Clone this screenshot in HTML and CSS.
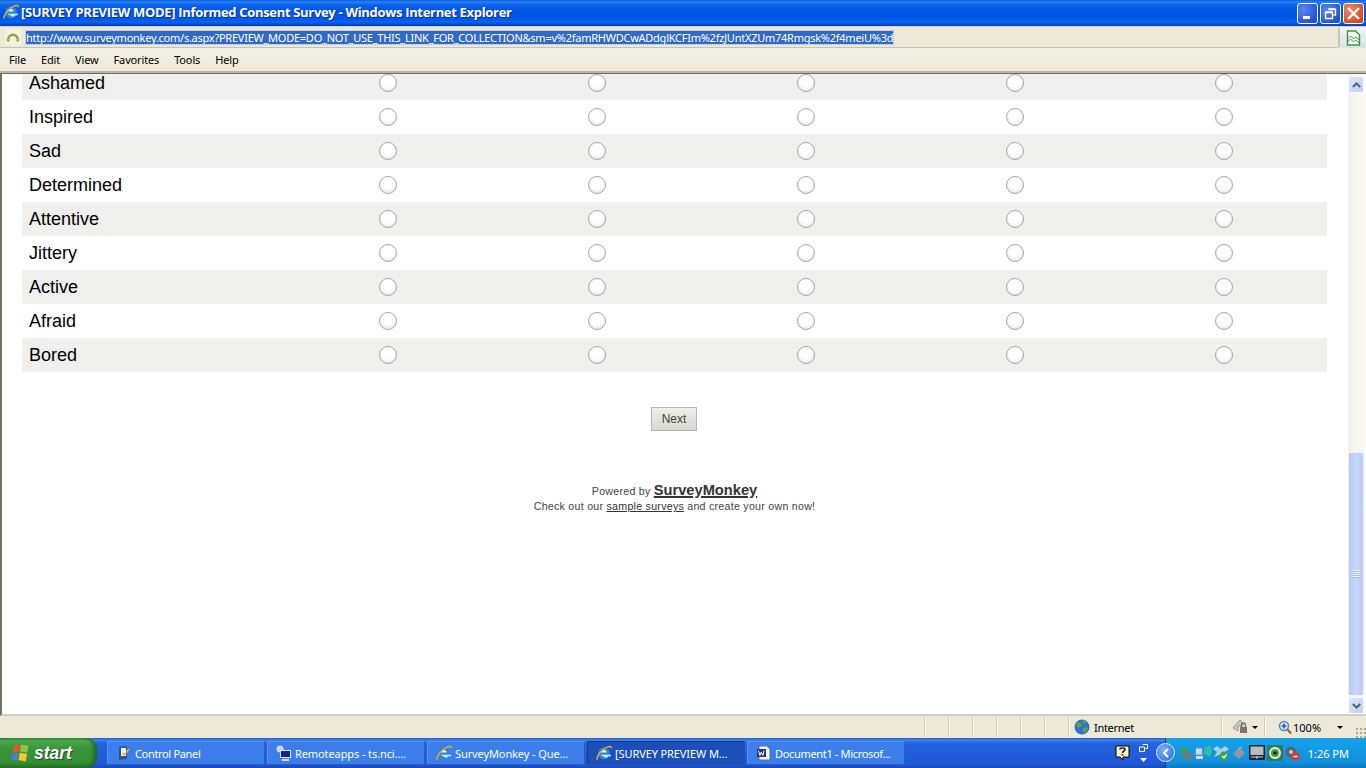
FILE: index.html
```html
<!DOCTYPE html>
<html lang="en">
<head>
<meta charset="utf-8">
<title>[SURVEY PREVIEW MODE] Informed Consent Survey - Windows Internet Explorer</title>
<link rel="stylesheet" href="styles.css">
</head>
<body>
<svg class="defs" width="0" height="0" aria-hidden="true">
  <symbol id="ie" viewBox="0 0 16 16">
    <circle cx="8" cy="8.500" r="6" fill="#2a86dc"/>
    <path d="M5.200 7.400a2.900 2.900 0 0 1 5.700 0z" fill="#e6f3ff"/>
    <path d="M4.900 9.700H15v1.600h-2.700a2.800 2.800 0 0 1-4.800 0l-.1.100a3 3 0 0 1-2.500-1.700z" fill="#d5e9fb"/>
    <path d="M1.500 14.800C-.4 13.200 4.500 6 8.500 3.500 12 1.300 15.900.4 15.100 3.200" fill="none" stroke="#eeb01e" stroke-width="1.400"/>
  </symbol>
</svg>
<div class="app">
  <header class="titlebar">
    <svg class="title-icon"><use href="#ie"/></svg>
    <span class="title-text">[SURVEY PREVIEW MODE] Informed Consent Survey - Windows Internet Explorer</span>
    <div class="win-buttons">
      <div class="win-btn"><svg width="21" height="21" viewBox="0 0 21 21"><rect x="6" y="13" width="7" height="3" fill="#fff"/></svg></div>
      <div class="win-btn"><svg width="21" height="21" viewBox="0 0 21 21"><path d="M8.500 6.500h7v5.500h-2M5.500 9.500h7v6h-7z" fill="none" stroke="#fff" stroke-width="1.400"/><path d="M8.500 6h7M5.500 9h7" stroke="#fff" stroke-width="1.600"/></svg></div>
      <div class="win-btn win-close"><svg width="21" height="21" viewBox="0 0 21 21"><path d="M5 5l11 11M16 5L5 16" stroke="#fff" stroke-width="2.400"/></svg></div>
    </div>
  </header>
  <div class="addressbar">
    <div class="addr-field">
      <div class="addr-icon"><svg width="16" height="16" viewBox="0 0 16 16"><path d="M3.200 10.500A4.800 4.800 0 0 1 12.800 10.500" fill="none" stroke="#8fa83c" stroke-width="2.400"/><path d="M1 10.500h4.400L3.200 13.200zM10.600 10.500H15l-2.200 2.700z" fill="#8fa83c"/></svg></div>
      <span class="addr-url">http://www.surveymonkey.com/s.aspx?PREVIEW_MODE=DO_NOT_USE_THIS_LINK_FOR_COLLECTION&amp;sm=v%2famRHWDCwADdglKCFIm%2fzJUntXZUm74Rmgsk%2f4meiU%3d</span>
    </div>
    <div class="compat"><svg width="15" height="16" viewBox="0 0 15 16"><path d="M1.500 1h8l4 4v10h-12z" fill="#fff" stroke="#2e9a35" stroke-width="1.400"/><path d="M1.500 9l3-3 3 3 2-2 4 3M1.500 12l3-3 3 3 2-2 4 3" fill="none" stroke="#2e9a35"/></svg></div>
  </div>
  <nav class="menubar">
    <span class="menu-item">File</span>
    <span class="menu-item">Edit</span>
    <span class="menu-item">View</span>
    <span class="menu-item">Favorites</span>
    <span class="menu-item">Tools</span>
    <span class="menu-item">Help</span>
  </nav>
  <div class="viewport">
    <main class="page">
      <div class="survey">
        <div class="row"><span class="label">Ashamed</span><input class="radio" type="radio" name="r1"><input class="radio" type="radio" name="r1"><input class="radio" type="radio" name="r1"><input class="radio" type="radio" name="r1"><input class="radio" type="radio" name="r1"></div>
        <div class="row"><span class="label">Inspired</span><input class="radio" type="radio" name="r2"><input class="radio" type="radio" name="r2"><input class="radio" type="radio" name="r2"><input class="radio" type="radio" name="r2"><input class="radio" type="radio" name="r2"></div>
        <div class="row"><span class="label">Sad</span><input class="radio" type="radio" name="r3"><input class="radio" type="radio" name="r3"><input class="radio" type="radio" name="r3"><input class="radio" type="radio" name="r3"><input class="radio" type="radio" name="r3"></div>
        <div class="row"><span class="label">Determined</span><input class="radio" type="radio" name="r4"><input class="radio" type="radio" name="r4"><input class="radio" type="radio" name="r4"><input class="radio" type="radio" name="r4"><input class="radio" type="radio" name="r4"></div>
        <div class="row"><span class="label">Attentive</span><input class="radio" type="radio" name="r5"><input class="radio" type="radio" name="r5"><input class="radio" type="radio" name="r5"><input class="radio" type="radio" name="r5"><input class="radio" type="radio" name="r5"></div>
        <div class="row"><span class="label">Jittery</span><input class="radio" type="radio" name="r6"><input class="radio" type="radio" name="r6"><input class="radio" type="radio" name="r6"><input class="radio" type="radio" name="r6"><input class="radio" type="radio" name="r6"></div>
        <div class="row"><span class="label">Active</span><input class="radio" type="radio" name="r7"><input class="radio" type="radio" name="r7"><input class="radio" type="radio" name="r7"><input class="radio" type="radio" name="r7"><input class="radio" type="radio" name="r7"></div>
        <div class="row"><span class="label">Afraid</span><input class="radio" type="radio" name="r8"><input class="radio" type="radio" name="r8"><input class="radio" type="radio" name="r8"><input class="radio" type="radio" name="r8"><input class="radio" type="radio" name="r8"></div>
        <div class="row"><span class="label">Bored</span><input class="radio" type="radio" name="r9"><input class="radio" type="radio" name="r9"><input class="radio" type="radio" name="r9"><input class="radio" type="radio" name="r9"><input class="radio" type="radio" name="r9"></div>
      </div>
      <div class="next-wrap"><button class="next" type="button">Next</button></div>
      <footer class="powered">
        <div class="powered-line">Powered by <a class="brand" href="#">SurveyMonkey</a></div>
        <div class="sample-line">Check out our <a class="sample" href="#">sample surveys</a> and create your own now!</div>
      </footer>
    </main>
    <div class="scrollbar">
      <div class="sb-btn"><svg width="9" height="6" viewBox="0 0 9 6"><path d="M.8 5L4.500 1.500 8.200 5" fill="none" stroke="#4d6185" stroke-width="2"/></svg></div>
      <div class="sb-track">
        <div class="sb-thumb"><div class="sb-grip"></div></div>
      </div>
      <div class="sb-btn"><svg width="9" height="6" viewBox="0 0 9 6"><path d="M.8 1L4.500 4.500 8.200 1" fill="none" stroke="#4d6185" stroke-width="2"/></svg></div>
    </div>
  </div>
  <div class="statusbar">
    <div class="st-empty"></div>
    <div class="st-cell"></div><div class="st-cell"></div><div class="st-cell"></div><div class="st-cell"></div><div class="st-cell"></div><div class="st-cell"></div>
    <div class="st-zone">
      <svg width="16" height="16" viewBox="0 0 16 16"><circle cx="8" cy="8" r="7.500" fill="#2f6fd0"/><path d="M3 3l4 1 1 3-3 2-3-2zM9 9l4-1 1 2-3 4-2-1zM9 1l4 2-2 2-2-1z" fill="#58a845"/></svg>
      <span class="zone-name">Internet</span>
    </div>
    <div class="st-protect">
      <svg width="16" height="16" viewBox="0 0 16 16"><path d="M1 9l7-8 3 3v3H6v5z" fill="#c8c8c0" stroke="#98988f"/><rect x="8" y="8" width="7" height="6" fill="#77776f"/><path d="M9.500 8V6a2 2 0 0 1 4 0v2" fill="none" stroke="#77776f" stroke-width="1.300"/></svg>
      <span class="caret"></span>
    </div>
    <div class="st-zoom">
      <svg width="14" height="15" viewBox="0 0 14 15"><circle cx="6" cy="6" r="4.500" fill="#d8e8fa" stroke="#5b83c4" stroke-width="1.500"/><path d="M3.500 6h5M6 3.500v5" stroke="#2a5cb8" stroke-width="1.600"/><path d="M9.500 9.500l3.500 4" stroke="#a05a3c" stroke-width="2"/></svg>
      <span>100%</span>
      <span class="caret caret-zoom"></span>
    </div>
    <div class="st-grip"></div>
  </div>
  <div class="taskbar">
    <button class="start" type="button">
      <svg width="20" height="18" viewBox="0 0 20 18"><path d="M4 1.500l6-1.200-1.200 7.400-6.300 1z" fill="#e4572e"/><path d="M11 .5l7.500 1.200-1.300 6.800-7.200-1z" fill="#8cc63f"/><path d="M2.200 9.700l6.300-.9-1.200 7.700-6.600-1.300z" fill="#3f83dc"/><path d="M9.700 8.800l7.300 1-1.200 7.700-7.300-1.500z" fill="#f6c82e"/></svg>
      <span>start</span>
    </button>
    <div class="tasks">
      <div class="task task-tight">
        <svg width="16" height="16" viewBox="0 0 16 16"><path d="M3 2l8-1v13l-8 1z" fill="#2f5590"/><path d="M5 3h5v8H5z" fill="#f4f4ec"/><path d="M6 8l2 2 5-6" fill="none" stroke="#e8b82a" stroke-width="1.500"/></svg>
        <span>Control Panel</span>
      </div>
      <div class="task">
        <svg width="16" height="16" viewBox="0 0 16 16"><circle cx="4" cy="4" r="3.500" fill="#cfd6de"/><rect x="4" y="5" width="11" height="8" fill="#e2e6ea"/><rect x="5" y="6" width="9" height="6" fill="#12258c"/><rect x="6" y="14" width="7" height="2" fill="#d5d9dd"/></svg>
        <span>Remoteapps - ts.nci....</span>
      </div>
      <div class="task">
        <svg width="16" height="16"><use href="#ie"/></svg>
        <span>SurveyMonkey - Que...</span>
      </div>
      <div class="task task-active">
        <svg width="16" height="16"><use href="#ie"/></svg>
        <span>[SURVEY PREVIEW M...</span>
      </div>
      <div class="task task-tight">
        <svg width="16" height="16" viewBox="0 0 16 16"><path d="M3 1h8l3 3v11H3z" fill="#f4f6fa" stroke="#5a6a90"/><rect x="1" y="4" width="9" height="8" fill="#22367e"/><path d="M2.500 5.500l1.300 5 1.500-3.500 1.500 3.500 1.300-5" fill="none" stroke="#fff"/></svg>
        <span>Document1 - Microsof...</span>
      </div>
    </div>
    <div class="quick">
      <svg class="help" width="15" height="16" viewBox="0 0 15 16"><path d="M1 1h13v11H8v3l-3-3H1z" fill="#fbf7b8" stroke="#000"/><path d="M5 4.500C5 2.500 10 2.500 10 4.500 10 6 7.500 6 7.500 8M7.500 9v1.500" fill="none" stroke="#16217a" stroke-width="1.700"/></svg>
      <div class="lang">
        <svg width="9" height="8" viewBox="0 0 9 8"><path d="M3.500.5h5v4h-2M.5 3h5v4.500h-5z" fill="none" stroke="#fff"/></svg>
        <svg width="7" height="4" viewBox="0 0 7 4"><path d="M0 0h7L3.500 4z" fill="#fff"/></svg>
      </div>
    </div>
    <div class="tray">
      <div class="tray-toggle"><svg width="10" height="10" viewBox="0 0 10 10"><path d="M7 1L3 5l4 4" fill="none" stroke="#fff" stroke-width="2"/></svg></div>
      <div class="tray-icons">
        <svg width="14" height="16" viewBox="0 0 14 16"><rect x="2" y="7" width="11" height="7" fill="#6e7a84" transform="rotate(20 8 11)"/><path d="M1 5l4-4 1 3h3v3H6l-1 2z" fill="#38a53d"/></svg>
        <svg width="16" height="16" viewBox="0 0 16 16"><rect x=".5" y="3" width="7" height="7" fill="#c4dcf2" stroke="#6890bc"/><rect x="1" y="11" width="7" height="3" fill="#d8dee6"/><path d="M9.500 3c1.500 2 1.500 4 0 6M11.500 2c2 2.500 2 5.500 0 8M13.500 1c2.500 3 2.500 7 0 10" fill="none" stroke="#4cdf6c" stroke-width="1.200"/></svg>
        <svg width="16" height="16" viewBox="0 0 16 16"><path d="M4 1l4 3 4-3 4 3-4 3 3 3-5 3-4-3-5 2 3-5-4-3z" fill="#a8cdea"/><circle cx="11" cy="11" r="4.500" fill="#38a548"/><path d="M9 11l2 2 2.500-3.500" fill="none" stroke="#fff" stroke-width="1.300"/></svg>
        <svg class="tray-spaced" width="14" height="14" viewBox="0 0 14 14"><path d="M1 8l6-7 6 6-6 6z" fill="#8d98a3"/><path d="M6 3l4-2" stroke="#b8c0c8"/></svg>
        <svg class="tray-spaced" width="16" height="16" viewBox="0 0 16 16"><rect width="16" height="15" fill="#14233c"/><rect x="1.500" y="1.500" width="13" height="8.500" fill="#b9b9b5"/><path d="M2 12h12M8 11v3" stroke="#d4d8e0"/></svg>
        <svg width="16" height="16" viewBox="0 0 16 16"><rect width="16" height="16" fill="#2f7c5c"/><circle cx="8" cy="8" r="6" fill="#e6e8e6"/><circle cx="8" cy="8" r="4" fill="#3fa832"/><circle cx="8" cy="8" r="1.800" fill="#123"/></svg>
        <svg width="15" height="15" viewBox="0 0 15 15"><circle cx="6" cy="6" r="5.500" fill="#5a646c"/><circle cx="6" cy="6" r="2" fill="#c6ccd2"/><circle cx="10.500" cy="10.500" r="4" fill="#e23a2a"/><path d="M8.500 10.500h4" stroke="#fff" stroke-width="1.500"/></svg>
      </div>
      <span class="clock">1:26 PM</span>
    </div>
  </div>
</div>
</body>
</html>
```
FILE: styles.css
```css
* { box-sizing: border-box; }
html, body { margin: 0; height: 100%; overflow: hidden; }
body { font-family: "Liberation Sans", Arial, sans-serif; background: #fff; }
.defs { position: absolute; }
svg { display: block; flex: none; }
.app { display: flex; flex-direction: column; height: 768px; }

.titlebar {
  height: 26px; flex: none; display: flex; align-items: center; padding: 0 2px 2px 3px; color: #fff;
  background: linear-gradient(#0a5fe4 0, #2a80f2 2px, #0a62ea 5px, #0055e5 12px, #0058e8 19px, #0866f2 22px, #0050d8 24px, #003fb8 26px);
}
.title-icon { width: 16px; height: 16px; margin-right: 2px; }
.title-text { font: bold 13px "Open Sans", sans-serif; letter-spacing: -0.32px; white-space: nowrap; text-shadow: 1px 1px 0 #0a2f9a; }
.win-buttons { margin-left: auto; display: flex; gap: 2px; padding-top: 2px; }
.win-btn { width: 21px; height: 21px; border-radius: 3px; border: 1px solid #fff; background: radial-gradient(circle at 30% 30%, #5a86ee, #2a55d8 70%, #2448c4); display: flex; align-items: center; justify-content: center; }
.win-btn svg { margin: -1px; }
.win-close { background: radial-gradient(circle at 30% 30%, #ee8a64, #d8502c 70%, #c44018); }

.addressbar { height: 22px; flex: none; display: flex; background: #ece9d8; border-top: 1px solid #d6d3c2; }
.addr-field { flex: 1; display: flex; align-items: center; padding-left: 5px; border-bottom: 1px solid #c4c2b2; min-width: 0; }
.addr-icon { width: 16px; height: 16px; margin-right: 5px; background: #f2f2e0; }
.addr-url { font: 11px "Noto Sans", sans-serif; color: #fff; background: #316ac5; white-space: nowrap; line-height: 13px; outline: 1px dotted #9cb6e0; letter-spacing: -0.25px; }
.compat { width: 28px; display: flex; align-items: center; justify-content: center; background: linear-gradient(#f4f4f6, #dcdfe6); border-left: 2px solid #c8c6b6; border-radius: 2px; }

.menubar { height: 25px; flex: none; display: flex; align-items: center; padding: 0 0 0 9px; gap: 15px; background: linear-gradient(#f2f1e6, #ece9d8); border-bottom: 2px solid #b8b5a6; font: 11px "Noto Sans", sans-serif; letter-spacing: -0.15px; color: #000; }
.menu-item { line-height: 14px; }

.viewport { flex: 1; min-height: 0; display: flex; overflow: hidden; background: #fff; border-top: 1px solid #716f64; border-left: 2px solid #716f64; border-bottom: 2px solid #d0cec0; }
.page { flex: 1; min-width: 0; margin-top: -8px; padding-left: 20px; }
.survey { width: 1305px; }
.row { height: 34px; display: grid; grid-template-columns: 261px repeat(5, 209px); align-items: center; justify-items: center; }
.row:nth-child(odd) { background: #efefed; }
.label { justify-self: start; padding-left: 7px; font-size: 18px; color: #000; }
.radio { appearance: none; width: 18px; height: 18px; margin: 0; border-radius: 50%; border: 1px solid #a6a6a6; background: radial-gradient(circle at 50% 35%, #fff 45%, #f2f2f2 68%, #cfcfcf 100%); }

.next-wrap { display: flex; justify-content: center; padding: 35px 0 0 0; width: 1304px; }
.next { width: 46px; height: 24px; padding: 0; border: 1px solid #b8b8b0; background: linear-gradient(#efefeb, #d8d8d2); font: 12px "Liberation Sans", sans-serif; color: #444; }
.powered { width: 1305px; margin-top: 50px; text-align: center; color: #444; font-size: 10.67px; letter-spacing: 0.25px; }
.powered-line { line-height: 18px; }
.brand { font-size: 14.67px; font-weight: bold; color: #333; letter-spacing: 0; text-decoration: underline; text-decoration-thickness: 2px; }
.sample-line { line-height: 13px; }
.sample { color: #333; text-decoration: underline; }

.scrollbar { width: 18px; margin-left: auto; flex: none; display: flex; flex-direction: column; background: linear-gradient(90deg, #f2f1e8, #fbfaf6); padding: 2px 2px 0 0; }
.sb-btn { height: 17px; flex: none; display: flex; align-items: center; justify-content: center; background: linear-gradient(135deg, #dde7fb, #bccffa); border: 1px solid #fff; border-radius: 2px; }
.sb-track { flex: 1; min-height: 0; display: flex; flex-direction: column; justify-content: flex-end; padding-bottom: 1px; }
.sb-thumb { height: 244px; display: flex; align-items: center; justify-content: center; background: linear-gradient(90deg, #b5c9f7, #c6d6fb 50%, #b8ccf8); border: 1px solid #eef2fd; border-radius: 2px; }
.sb-grip { width: 7px; height: 8px; background: repeating-linear-gradient(#eef3fe 0 1px, #9fb8ee 1px 2px); }

.statusbar { height: 22px; flex: none; display: flex; align-items: center; background: #ece9d8; font: 11px "Noto Sans", sans-serif; color: #000; }
.st-empty { width: 925px; }
.st-cell { width: 24px; height: 20px; border-left: 1px solid #fbfaf4; box-shadow: -1px 0 0 #cfccba; }
.st-zone { width: 153px; height: 20px; display: flex; align-items: center; gap: 4px; padding-left: 4px; border-left: 1px solid #fbfaf4; box-shadow: -1px 0 0 #cfccba; }
.zone-name { letter-spacing: -0.3px; }
.st-protect { width: 43px; height: 20px; display: flex; align-items: center; gap: 4px; padding-left: 9px; border-left: 1px solid #fbfaf4; box-shadow: -1px 0 0 #cfccba; }
.st-zoom { width: 90px; height: 20px; display: flex; align-items: center; gap: 1px; padding-left: 12px; border-left: 1px solid #fbfaf4; box-shadow: -1px 0 0 #cfccba; }
.caret { width: 0; height: 0; border: 3px solid transparent; border-top: 3px solid #000; border-bottom: 0; }
.caret-zoom { margin-left: 15px; }
.st-grip { flex: 1; height: 11px; align-self: flex-end; background: radial-gradient(circle, #aca899 1px, transparent 1px) 0 0 / 4px 4px; }

.taskbar { flex: none; height: 30px; display: flex; align-items: center; color: #fff; background: linear-gradient(#1f5ac8 0, #3c83f0 2px, #2463dc 5px, #2058d8 26px, #1a48b8 30px); font: 11px "Noto Sans", sans-serif; }
.start { width: 97px; height: 30px; flex: none; padding: 0 0 0 10px; display: flex; align-items: center; gap: 4px; border: 0; border-radius: 3px 11px 11px 0; color: #fff; background: linear-gradient(#2f8a2f 0, #4ea84e 3px, #3a943a 10px, #359035 24px, #286e28 30px); box-shadow: inset -5px 0 4px -2px #1f641f; font: italic bold 17.5px "Liberation Sans", sans-serif; text-shadow: 1px 1px 1px #1a4a1a; }
.tasks { margin-left: 10px; display: flex; gap: 2px; }
.task { width: 158px; height: 24px; display: flex; align-items: center; gap: 3px; padding-left: 9px; border-radius: 2px; background: #3c7eea; box-shadow: inset 1px 1px 0 #5a94f0, inset -1px -1px 0 #2a5cc0; white-space: nowrap; overflow: hidden; letter-spacing: -0.1px; }
.task-tight { letter-spacing: -0.33px; }
.task-active { background: #1c50b8; box-shadow: inset 1px 1px 0 #123a8e; }
.quick { margin-left: auto; display: flex; align-items: center; gap: 9px; padding-right: 17px; }
.lang { display: flex; flex-direction: column; align-items: center; gap: 6px; }
.tray { width: 201px; height: 30px; flex: none; display: flex; align-items: center; position: relative; padding-left: 13px; background: linear-gradient(#18a0e0 0, #14a0ea 3px, #1290dc 24px, #0c78c4 30px); border-left: 1px solid #0e3a9a; }
.tray-toggle { position: absolute; left: -10px; top: 5px; width: 19px; height: 19px; border-radius: 50%; border: 1px solid #dfeaff; background: radial-gradient(circle at 40% 35%, #7ab0f8, #2a66d8); display: flex; align-items: center; justify-content: center; }
.tray-icons { display: flex; align-items: center; gap: 2px; }
.tray-spaced { margin-left: 1px; }
.clock { margin-left: auto; padding-right: 17px; font-size: 11px; }
```
